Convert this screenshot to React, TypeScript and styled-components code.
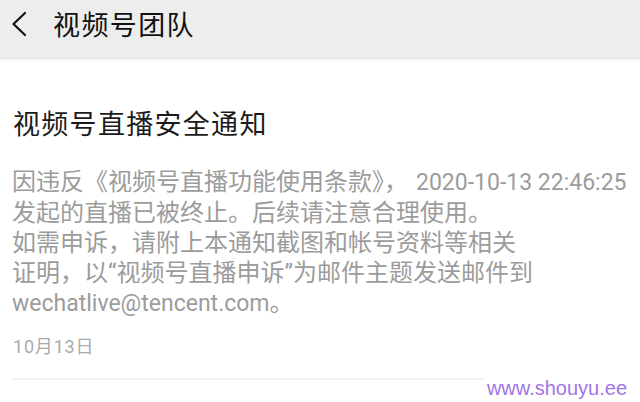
import styled, { createGlobalStyle } from "styled-components";

const GlobalStyle = createGlobalStyle`
    html, body {
        margin: 0;
        padding: 0;
        background: #ffffff;
    }
    body {
        font-family: Roboto, "Noto Sans CJK SC", sans-serif;
    }
`;

const Page = styled.div`
    position: relative;
    width: 640px;
    height: 402px;
    overflow: hidden;
    background: #ffffff;
`;

const Header = styled.div`
    height: 59px;
    padding: 0 0 11px 9px;
    box-sizing: border-box;
    display: flex;
    align-items: center;
    background: #ededed;
    border-bottom: 1px solid #e4e4e4;
    box-shadow: 0 2px 2px rgba(0, 0, 0, 0.03);
`;

const BackButton = styled.div`
    width: 20px;
    height: 28px;
    display: flex;
    align-items: center;
    justify-content: center;
`;

const HeaderTitle = styled.div`
    margin-left: 24px;
    font-family: "Noto Sans CJK SC", sans-serif;
    font-size: 27px;
    letter-spacing: 1.4px;
    line-height: 40px;
    color: #111111;
`;

const Content = styled.div`
    padding: 46px 12px 0 12px;
`;

const Title = styled.div`
    font-family: "Noto Sans CJK SC", sans-serif;
    font-size: 27px;
    letter-spacing: 1.3px;
    line-height: 36px;
    color: #1b1b1b;
    padding-left: 1px;
`;

const Body = styled.div`
    margin-top: 26px;
    font-size: 24px;
    line-height: 30px;
    color: #9c9c9c;
`;

const Line = styled.div`
    white-space: nowrap;
`;

const Latin = styled.span<{ $size: number; $gap: number }>`
    font-family: Roboto, sans-serif;
    font-size: ${(p) => p.$size}px;
    margin-left: ${(p) => p.$gap}px;
`;

const Time = styled.div`
    margin-top: 16px;
    font-size: 18px;
    letter-spacing: 0.8px;
    line-height: 24px;
    color: #ababab;
    padding-left: 1px;
`;

const Divider = styled.div`
    margin-top: 19px;
    height: 2px;
    background: #f3f3f3;
`;

const Watermark = styled.div`
    position: absolute;
    right: 11px;
    bottom: 2px;
    font-family: "Liberation Sans", Arial, sans-serif;
    font-size: 20px;
    line-height: 24px;
    color: #a075e6;
    background: #ffffff;
    padding: 0 2px;
`;

const BackIcon = () => (
    <svg width="18" height="26" viewBox="0 0 18 26">
        <path
            d="M15 2 L3.5 13 L15 24"
            fill="none"
            stroke="#111"
            strokeWidth="2.2"
            strokeLinecap="round"
            strokeLinejoin="round"
        />
    </svg>
);

const App = () => {
    return (
        <Page>
            <GlobalStyle />
            <Header>
                <BackButton>
                    <BackIcon />
                </BackButton>
                <HeaderTitle>视频号团队</HeaderTitle>
            </Header>
            <Content>
                <Title>视频号直播安全通知</Title>
                <Body>
                    <Line>
                        因违反《视频号直播功能使用条款》，
                        <Latin $size={23} $gap={8}>
                            2020-10-13 22:46:25
                        </Latin>
                    </Line>
                    <Line>发起的直播已被终止。后续请注意合理使用。</Line>
                    <Line>如需申诉，请附上本通知截图和帐号资料等相关</Line>
                    <Line>证明，以“视频号直播申诉”为邮件主题发送邮件到</Line>
                    <Line>
                        <Latin $size={23} $gap={0}>
                            wechatlive@tencent.com
                        </Latin>
                        。
                    </Line>
                </Body>
                <Time>10月13日</Time>
                <Divider />
            </Content>
            <Watermark>www.shouyu.ee</Watermark>
        </Page>
    );
};

export default App;
